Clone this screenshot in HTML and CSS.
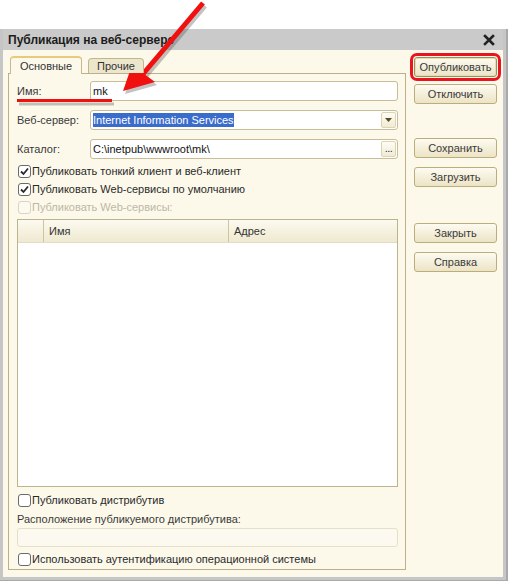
FILE: index.html
```html
<!DOCTYPE html>
<html lang="ru">
<head>
<meta charset="utf-8">
<title>Публикация на веб-сервере</title>
<link rel="stylesheet" href="styles.css">
</head>
<body>
<div class="page">
  <div class="dialog">
    <div class="titlebar">
      <span class="title">Публикация на веб-сервере</span>
      <svg class="close" width="12" height="12" viewBox="0 0 12 12"><path d="M2 2 L10 10 M10 2 L2 10" stroke="#222" stroke-width="2.6" stroke-linecap="square"/></svg>
    </div>
    <div class="client">
      <div class="main">
        <div class="tabs">
          <div class="tab active">Основные</div>
          <div class="tab">Прочие</div>
        </div>
        <div class="panel">
          <div class="field">
            <span class="label">Имя:</span>
            <div class="input"><span class="val">mk</span></div>
          </div>
          <div class="field">
            <span class="label">Веб-сервер:</span>
            <div class="input">
              <span class="val"><span class="sel">Internet Information Services</span></span>
              <span class="ibtn"><svg width="7" height="4" viewBox="0 0 7 4"><path d="M0 0 H7 L3.5 4 Z" fill="#5a4a22"/></svg></span>
            </div>
          </div>
          <div class="field">
            <span class="label">Каталог:</span>
            <div class="input">
              <span class="val">C:\inetpub\wwwroot\mk\</span>
              <span class="ibtn dots">...</span>
            </div>
          </div>
          <div class="check first"><span class="box on"><svg width="11" height="11" viewBox="0 0 11 11"><path d="M2 5.5 L4.5 8 L9 2.5" fill="none" stroke="#2a2a2a" stroke-width="1.8"/></svg></span>Публиковать тонкий клиент и веб-клиент</div>
          <div class="check"><span class="box on"><svg width="11" height="11" viewBox="0 0 11 11"><path d="M2 5.5 L4.5 8 L9 2.5" fill="none" stroke="#2a2a2a" stroke-width="1.8"/></svg></span>Публиковать Web-сервисы по умолчанию</div>
          <div class="check disabled"><span class="box"></span>Публиковать Web-сервисы:</div>
          <div class="table">
            <div class="thead">
              <div class="th c0"></div>
              <div class="th c1">Имя</div>
              <div class="th c2">Адрес</div>
            </div>
            <div class="tbody"></div>
          </div>
          <div class="check dist"><span class="box"></span>Публиковать дистрибутив</div>
          <div class="plabel">Расположение публикуемого дистрибутива:</div>
          <div class="input wide disabled-input"></div>
          <div class="check auth"><span class="box"></span>Использовать аутентификацию операционной системы</div>
        </div>
      </div>
      <div class="buttons">
        <div class="btn default">Опубликовать</div>
        <div class="btn">Отключить</div>
        <div class="btn g1">Сохранить</div>
        <div class="btn">Загрузить</div>
        <div class="btn g2">Закрыть</div>
        <div class="btn">Справка</div>
      </div>
    </div>
  </div>
  <svg class="annot" width="508" height="581" viewBox="0 0 508 581">
    <g opacity="0.35" transform="translate(2,3)">
      <path d="M203 3 L143 74" stroke="#555" stroke-width="5"/>
      <path d="M123 91 L132 65 L155 82 Z" fill="#555"/>
      <path d="M17 101 L112 101" stroke="#555" stroke-width="3"/>
    </g>
    <path d="M203 3 L143 74" stroke="#f01010" stroke-width="5"/>
    <path d="M123 91 L132 65 L155 82 Z" fill="#f01010"/>
    <path d="M17 100.5 L112 100.5" stroke="#f01010" stroke-width="3"/>
  </svg>
</div>
</body>
</html>
```
FILE: styles.css
```css
html, body {
  margin: 0;
  padding: 0;
  background: #fff;
}
.page {
  position: relative;
  width: 508px;
  height: 581px;
  padding-top: 29px;
  box-sizing: border-box;
  font-family: "Liberation Sans", Arial, sans-serif;
  font-size: 11px;
  color: #2e2e2e;
}
.dialog {
  height: 552px;
  background: #c6c6c6;
  padding: 0 5px 4px 3px;
  box-sizing: border-box;
  display: flex;
  flex-direction: column;
  box-shadow: inset -2px -1px 0 #a9a9a9;
}
.titlebar {
  height: 21px;
  display: flex;
  align-items: center;
  justify-content: space-between;
  padding: 0 8px 0 5px;
  background: #cacaca;
}
.title {
  font-weight: bold;
  font-size: 12px;
  color: #1c1c1c;
}
.close {
  display: block;
  margin-top: 1px;
}
.client {
  flex: 1;
  background: #fcf9ea;
  display: flex;
  padding: 6px 0 0 5px;
}
.main {
  width: 398px;
  display: flex;
  flex-direction: column;
}
.tabs {
  display: flex;
  align-items: flex-end;
  height: 17px;
  position: relative;
  z-index: 1;
}
.tab {
  box-sizing: border-box;
  height: 15px;
  border: 1px solid #c2b78c;
  border-bottom: none;
  border-radius: 4px 4px 0 0;
  background: #ece6cc;
  display: flex;
  align-items: center;
  justify-content: center;
  color: #333;
  margin-left: 6px;
  width: 56px;
}
.tab.active {
  height: 18px;
  margin-bottom: -1px;
  margin-left: 2px;
  width: 72px;
  background: #fcf9ea;
  border-color: #c9b98a;
  border-top: 2px solid #e7c97f;
  padding-bottom: 1px;
}
.panel {
  height: 497px;
  box-sizing: border-box;
  border: 1px solid #bbb08a;
  padding: 7px 7px 0 8px;
  display: flex;
  flex-direction: column;
}
.field {
  display: flex;
  align-items: center;
  height: 20px;
  margin-bottom: 9px;
}
.field + .field + .field {
  margin-bottom: 3px;
}
.label {
  width: 73px;
  color: #3a3a3a;
}
.input {
  flex: 1;
  height: 20px;
  box-sizing: border-box;
  border: 1px solid #c7bd96;
  border-radius: 3px;
  background: #fff;
  display: flex;
  align-items: center;
  padding: 1px;
}
.val {
  flex: 1;
  padding-left: 1px;
  color: #111;
  white-space: nowrap;
}
.sel {
  background: #3a6ccc;
  color: #fff;
  padding: 1px 0;
}
.ibtn {
  width: 15px;
  height: 16px;
  box-sizing: border-box;
  border: 1px solid #dcd3b0;
  border-radius: 2px;
  background: linear-gradient(#fdfcf6, #f1ebd4);
  display: flex;
  align-items: center;
  justify-content: center;
}
.ibtn.dots {
  font-size: 11px;
  line-height: 10px;
  align-items: flex-end;
  padding-bottom: 3px;
  color: #333;
  letter-spacing: -0.5px;
}
.check {
  display: flex;
  align-items: center;
  height: 18px;
  color: #2a2a2a;
}
.box {
  width: 13px;
  height: 13px;
  box-sizing: border-box;
  border: 1px solid #6a6a6a;
  border-radius: 3px;
  background: #fff;
  margin: 0 1px 0 1px;
  display: flex;
  align-items: center;
  justify-content: center;
}
.check.disabled {
  color: #bdb7a5;
}
.check.disabled .box {
  border-color: #d9d4c2;
  background: #fcfaf0;
}
.table {
  margin-top: 3px;
  height: 268px;
  box-sizing: border-box;
  border: 1px solid #bdb38c;
  display: flex;
  flex-direction: column;
  background: #fff;
}
.thead {
  height: 22px;
  display: flex;
  background: linear-gradient(#fcfaf0, #efe9d0);
  border-bottom: 1px solid #e2dcc4;
}
.th {
  display: flex;
  align-items: center;
  padding-left: 5px;
  color: #333;
}
.c0 {
  width: 20px;
  border-right: 1px solid #cdc4a0;
}
.c1 {
  width: 179px;
  border-right: 1px solid #cdc4a0;
}
.c2 {
  flex: 1;
}
.tbody {
  flex: 1;
}
.check.dist {
  margin-top: 4px;
}
.plabel {
  height: 19px;
  display: flex;
  align-items: center;
  color: #3a3a3a;
}
.input.wide {
  flex: none;
  height: 19px;
}
.disabled-input {
  background: #fcfaf0;
  border-color: #e6e0c9;
}
.check.auth {
  margin-top: 3px;
}
.buttons {
  margin-left: 8px;
  width: 83px;
  display: flex;
  flex-direction: column;
  padding-top: 1px;
}
.btn {
  height: 20px;
  box-sizing: border-box;
  border: 1px solid #bcae7c;
  border-radius: 3px;
  background: linear-gradient(#fdfbf1, #ece4c5);
  display: flex;
  align-items: center;
  justify-content: center;
  color: #3a3a3a;
  margin-bottom: 7px;
}
.btn.default {
  outline: 3px solid #e8141e;
  outline-offset: 1px;
  border-color: #9d8f5c;
  box-shadow: inset 0 0 0 1px #e6dcb6;
}
.btn.g1 {
  margin-top: 27px;
  margin-bottom: 9px;
}
.btn.g2 {
  margin-top: 29px;
  margin-bottom: 9px;
}
.annot {
  position: absolute;
  left: 0;
  top: 0;
  pointer-events: none;
}
```
